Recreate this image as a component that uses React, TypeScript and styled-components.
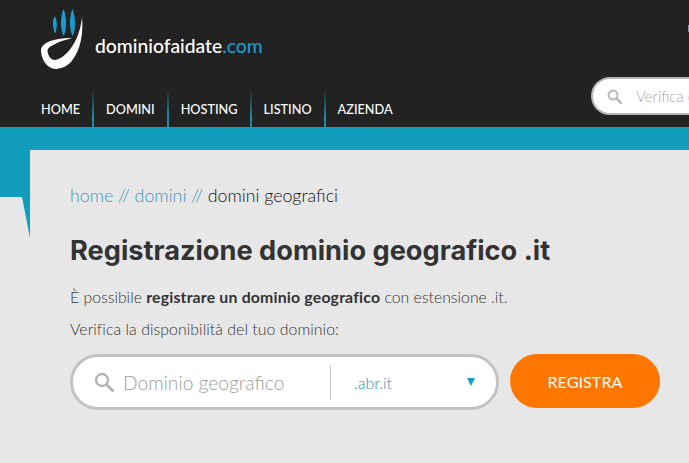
import React from 'react';
import styled, { createGlobalStyle } from 'styled-components';

const GlobalStyle = createGlobalStyle`
  html, body {
    margin: 0;
    padding: 0;
    background: #e7e7e7;
  }
  * {
    box-sizing: border-box;
  }
`;

const bodyFont = `'Lato', 'Open Sans', sans-serif`;

const Page = styled.div`
  width: 689px;
  height: 463px;
  overflow: hidden;
  font-family: ${bodyFont};
  color: #333;
`;

const Header = styled.header`
  display: grid;
  grid-template-columns: 591px 98px;
  height: 127px;
  background: #222;
`;

const HeaderLeft = styled.div`
  display: flex;
  flex-direction: column;
  justify-content: space-between;
  padding: 8px 0 0 40px;
`;

const Brand = styled.div`
  display: flex;
  align-items: center;
  gap: 11px;
  height: 62px;
`;

const BrandName = styled.span`
  font-size: 19.3px;
  font-weight: 500;
  color: #fff;
  padding-top: 12px;

  em {
    font-style: normal;
    color: #1a9ad0;
  }
`;

const Nav = styled.nav`
  display: flex;
  height: 36px;
`;

const NavItem = styled.a`
  display: flex;
  align-items: center;
  padding: 0 12px;
  font-size: 12.7px;
  font-weight: 500;
  color: #fff;
  border-right: 2px solid transparent;
  border-image: linear-gradient(to bottom, #222, #1f8ba5 70%) 1;

  &:first-child {
    padding-left: 1px;
  }

  &:last-child {
    border-right: none;
  }
`;

const HeaderRight = styled.div`
  display: flex;
  flex-direction: column;
  padding-top: 25px;
`;

const Marker = styled.span`
  align-self: flex-end;
  width: 1px;
  height: 7px;
  background: #4aa8e0;
`;

const TopSearch = styled.div`
  display: flex;
  align-items: center;
  gap: 14px;
  width: 200px;
  height: 38px;
  margin-top: 45px;
  padding-left: 14px;
  background: #fff;
  border: 2px solid #b5b5b5;
  border-radius: 19px 0 0 19px;
  font-size: 15px;
  font-weight: 300;
  color: #a8a8a8;
  white-space: nowrap;
`;

const Band = styled.div`
  height: 23px;
  background: #119dbb;
`;

const Body = styled.div`
  display: flex;
`;

const Side = styled.aside`
  display: flex;
  flex-direction: column;
  width: 30px;
`;

const SideBlock = styled.div`
  height: 47px;
  background: #119dbb;
`;

const SideTail = styled.div`
  height: 41px;
  background: #119dbb;
  clip-path: polygon(22px 0, 30px 0, 30px 100%);
`;

const Main = styled.main`
  flex: 1;
  padding: 35px 0 0 40px;
`;

const Crumbs = styled.div`
  font-size: 17.8px;
  line-height: 20px;
  color: #111;
  font-weight: 300;
`;

const CrumbLink = styled.a`
  color: #3f95b8;
`;

const Title = styled.h1`
  margin: 27px 0 0;
  font-family: 'Inter', 'Roboto', sans-serif;
  font-size: 27.2px;
  line-height: 38px;
  font-weight: 700;
  color: #333;
`;

const Text = styled.p`
  margin: 0;
  font-size: 15.8px;
  line-height: 18px;
  color: #333;
  font-weight: 300;

  strong {
    font-weight: 700;
    letter-spacing: 0.2px;
    color: #333;
  }
`;

const Intro = styled(Text)`
  margin-top: 18px;
`;

const Prompt = styled(Text)`
  margin-top: 14px;
  letter-spacing: 0.07px;
`;

const FormRow = styled.div`
  display: flex;
  align-items: flex-start;
  gap: 11px;
  margin-top: 16px;
`;

const SearchBox = styled.div`
  display: flex;
  align-items: center;
  width: 429px;
  height: 56px;
  padding-left: 21px;
  background: #fff;
  border: 3px solid #c2c2c2;
  border-radius: 28px;
`;

const QueryField = styled.div`
  display: flex;
  align-items: center;
  gap: 9px;
  width: 236px;
  font-size: 19.2px;
  font-weight: 300;
  color: #9c9c9c;
`;

const Divider = styled.span`
  width: 1px;
  height: 35px;
  background: #c4c4c4;
`;

const ExtensionSelect = styled.div`
  display: flex;
  align-items: center;
  justify-content: space-between;
  flex: 1;
  padding: 0 21px 0 23px;
  font-size: 16px;
  font-weight: 300;
  color: #2f8fb3;
`;

const Caret = styled.span`
  width: 0;
  height: 0;
  border-left: 4.5px solid transparent;
  border-right: 4.5px solid transparent;
  border-top: 8px solid #119dbb;
`;

const RegisterButton = styled.button`
  width: 150px;
  height: 54px;
  border: none;
  border-radius: 27px;
  background: #ff7600;
  color: #fff;
  font-family: ${bodyFont};
  font-size: 16.2px;
  font-weight: 400;
`;

const SearchIcon = ({ size, color }: { size: number; color: string }) => (
  <svg width={size} height={size} viewBox="0 0 20 20" fill="none" stroke={color}>
    <circle cx="8" cy="8" r="6" strokeWidth="2.4" />
    <path d="M12.5 12.5 L18.5 18.5" strokeWidth="3" strokeLinecap="round" />
  </svg>
);

const HandLogo = () => (
  <svg width="44" height="62" viewBox="0 0 44 62">
    <g fill="#1a9ad0">
      <path d="M13 17 C12.6 13 13.4 10 15 8 C16.6 11 17.2 15 16.6 20 C16.3 23 15.6 25 14.9 25 C14 24 13.4 21 13 17 Z" />
      <path d="M21 14 C21 9 22 4 23.5 1 C25.2 5 26 10 26 15 C26 21 25 26 23.6 28 C22.2 26 21 20 21 14 Z" />
      <path d="M30 14 C30 9 31 4 32.5 1 C34.2 5 35 10 35 15 C35 21 34 26 32.6 28 C31.2 26 30 20 30 14 Z" />
    </g>
    <path
      fill="#fff"
      d="M42 9 C43.5 25 41 42 31 54 C26 59 20 61 15 61 C6 60 1 50 1 42 C1 37 8 33 16 31.5 C22 30 28 30 32 30 C27 31.5 20 33 15 36 C10 38.5 7.5 40 7.5 43 C8 48 11 52 15 52 C21 51.5 28 45 33 37 C38 29 41 19 42 9 Z"
    />
  </svg>
);

const navItems = ['HOME', 'DOMINI', 'HOSTING', 'LISTINO', 'AZIENDA'];

export default function App() {
  return (
    <Page>
      <GlobalStyle />
      <Header>
        <HeaderLeft>
          <Brand>
            <HandLogo />
            <BrandName>
              dominiofaidate<em>.com</em>
            </BrandName>
          </Brand>
          <Nav>
            {navItems.map(item => (
              <NavItem key={item}>{item}</NavItem>
            ))}
          </Nav>
        </HeaderLeft>
        <HeaderRight>
          <Marker />
          <TopSearch>
            <SearchIcon size={15} color="#b5b5b5" />
            Verifica disponibilità
          </TopSearch>
        </HeaderRight>
      </Header>
      <Band />
      <Body>
        <Side>
          <SideBlock />
          <SideTail />
        </Side>
        <Main>
          <Crumbs>
            <CrumbLink>home // domini //</CrumbLink> domini geografici
          </Crumbs>
          <Title>Registrazione dominio geografico .it</Title>
          <Intro>
            È possibile <strong>registrare un dominio geografico</strong> con estensione .it.
          </Intro>
          <Prompt>Verifica la disponibilità del tuo dominio:</Prompt>
          <FormRow>
            <SearchBox>
              <QueryField>
                <SearchIcon size={20} color="#b4b4b4" />
                Dominio geografico
              </QueryField>
              <Divider />
              <ExtensionSelect>
                .abr.it
                <Caret />
              </ExtensionSelect>
            </SearchBox>
            <RegisterButton>REGISTRA</RegisterButton>
          </FormRow>
        </Main>
      </Body>
    </Page>
  );
}
